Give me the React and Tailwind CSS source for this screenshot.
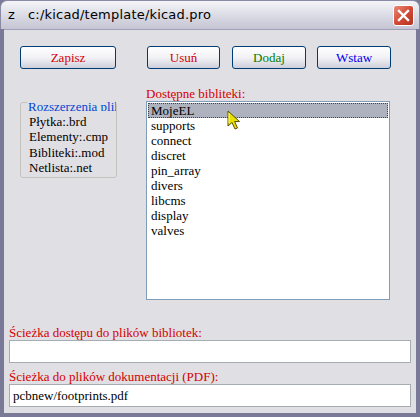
import React from "react";

const serif = { fontFamily: '"Liberation Serif", "Times New Roman", serif' };

const libs = ["MojeEL", "supports", "connect", "discret", "pin_array", "divers", "libcms", "display", "valves"];

function Btn({ label, color, w }) {
  return (
    <button
      className={`h-[23px] rounded-[3px] border border-[#003c74] bg-gradient-to-b from-white via-[#f2f2f6] to-[#cfcfdc] text-[13px] leading-none ${w} ${color}`}
      style={serif}
    >
      {label}
    </button>
  );
}

export default function App() {
  return (
    <div className="relative w-[420px] h-[417px] overflow-hidden bg-[#7a7a98]">
      {/* Title bar */}
      <div className="h-[29px] rounded-t-[7px] bg-gradient-to-b from-[#f4f4f8] via-[#dcdce6] to-[#c4c4d4] border border-[#8a8aa4] border-b-0 flex items-center pl-[7px] pr-[5px]">
        <span className="text-[13px] text-black tracking-[0.2px]" style={{ fontFamily: '"DejaVu Sans", Verdana, sans-serif' }}>
          z&nbsp;&nbsp;&nbsp;c:/kicad/template/kicad.pro
        </span>
        <div className="ml-auto w-[21px] h-[21px] rounded-[3px] border border-white bg-gradient-to-br from-[#e88a78] via-[#d24a36] to-[#b53222] flex items-center justify-center">
          <svg width="13" height="13" viewBox="0 0 13 13">
            <path d="M2 2 L11 11 M11 2 L2 11" stroke="white" strokeWidth="2.4" strokeLinecap="square" />
          </svg>
        </div>
      </div>

      {/* Client area */}
      <div className="absolute left-[4px] right-[4px] top-[29px] bottom-[4px] bg-[#e0dfe3] border-t border-[#a0a0b8]" style={serif}>
        <div className="flex pt-[16px] pl-[16px]">
          <Btn label="Zapisz" color="text-[#d40000]" w="w-[96px]" />
          <div className="w-[31px]" />
          <Btn label="Usuń" color="text-[#d40000]" w="w-[73px]" />
          <div className="w-[12px]" />
          <Btn label="Dodaj" color="text-[#008000]" w="w-[74px]" />
          <div className="w-[11px]" />
          <Btn label="Wstaw" color="text-[#0000ee]" w="w-[74px]" />
        </div>

        <div className="flex mt-[18px]">
          {/* Group box */}
          <div className="ml-[16px] mt-[7px] w-[97px] h-[84px] relative">
            <div className="absolute inset-x-0 top-[8px] bottom-0 rounded-[3px] border border-[#c4c2bc]" />
            <div className="absolute left-[7px] right-[1px] top-0 h-[17px] overflow-hidden whitespace-nowrap">
              <span className="bg-[#e0dfe3] px-[1px] text-[13px] leading-[16px] text-[#0046d5]">Rozszerzenia plików</span>
            </div>
            <div className="absolute left-[9px] top-[20px] text-[13px] leading-[15.3px] text-black whitespace-nowrap">
              <div>Płytka:.brd</div>
              <div>Elementy:.cmp</div>
              <div>Bibliteki:.mod</div>
              <div>Netlista:.net</div>
            </div>
          </div>

          {/* Library list */}
          <div className="ml-[29px] flex flex-col">
            <div className="text-[13px] leading-[14px] text-[#d40000]">Dostępne bibliteki:</div>
            <div className="relative w-[244px] h-[199px] border border-[#7f9db9] bg-white p-[1px]">
              {libs.map((l, i) => (
                <div
                  key={l}
                  className={`h-[15px] pl-[3px] text-[13px] leading-[15px] text-black ${i === 0 ? "bg-[#aeb2bf] outline outline-1 outline-dotted outline-[#444] -outline-offset-1" : ""}`}
                >
                  {l}
                </div>
              ))}
              <svg className="absolute left-[80px] top-[8px]" width="16" height="21" viewBox="0 0 16 21">
                <path d="M1 1 L1 16 L5 12.5 L8 19 L10.5 18 L7.6 11.5 L12.5 11.5 Z" fill="#e8e000" stroke="#5a5000" strokeWidth="1" strokeLinejoin="round" />
                <path d="M2 3 L2 13" stroke="#fffa90" strokeWidth="1" />
              </svg>
            </div>
          </div>
        </div>

        {/* Paths */}
        <div className="px-[5px] mt-[26px]">
          <div className="text-[13px] leading-[14px] text-[#d40000]">Ścieżka dostępu do plików bibliotek:</div>
          <div className="h-[23px] border border-[#a5acb2] bg-white" />
          <div className="mt-[7px] text-[13px] leading-[14px] text-[#d40000]">Ścieżka do plików dokumentacji (PDF):</div>
          <div className="h-[23px] border border-[#a5acb2] bg-white pl-[3px] text-[13px] leading-[21px] text-black">pcbnew/footprints.pdf</div>
        </div>
      </div>
    </div>
  );
}
